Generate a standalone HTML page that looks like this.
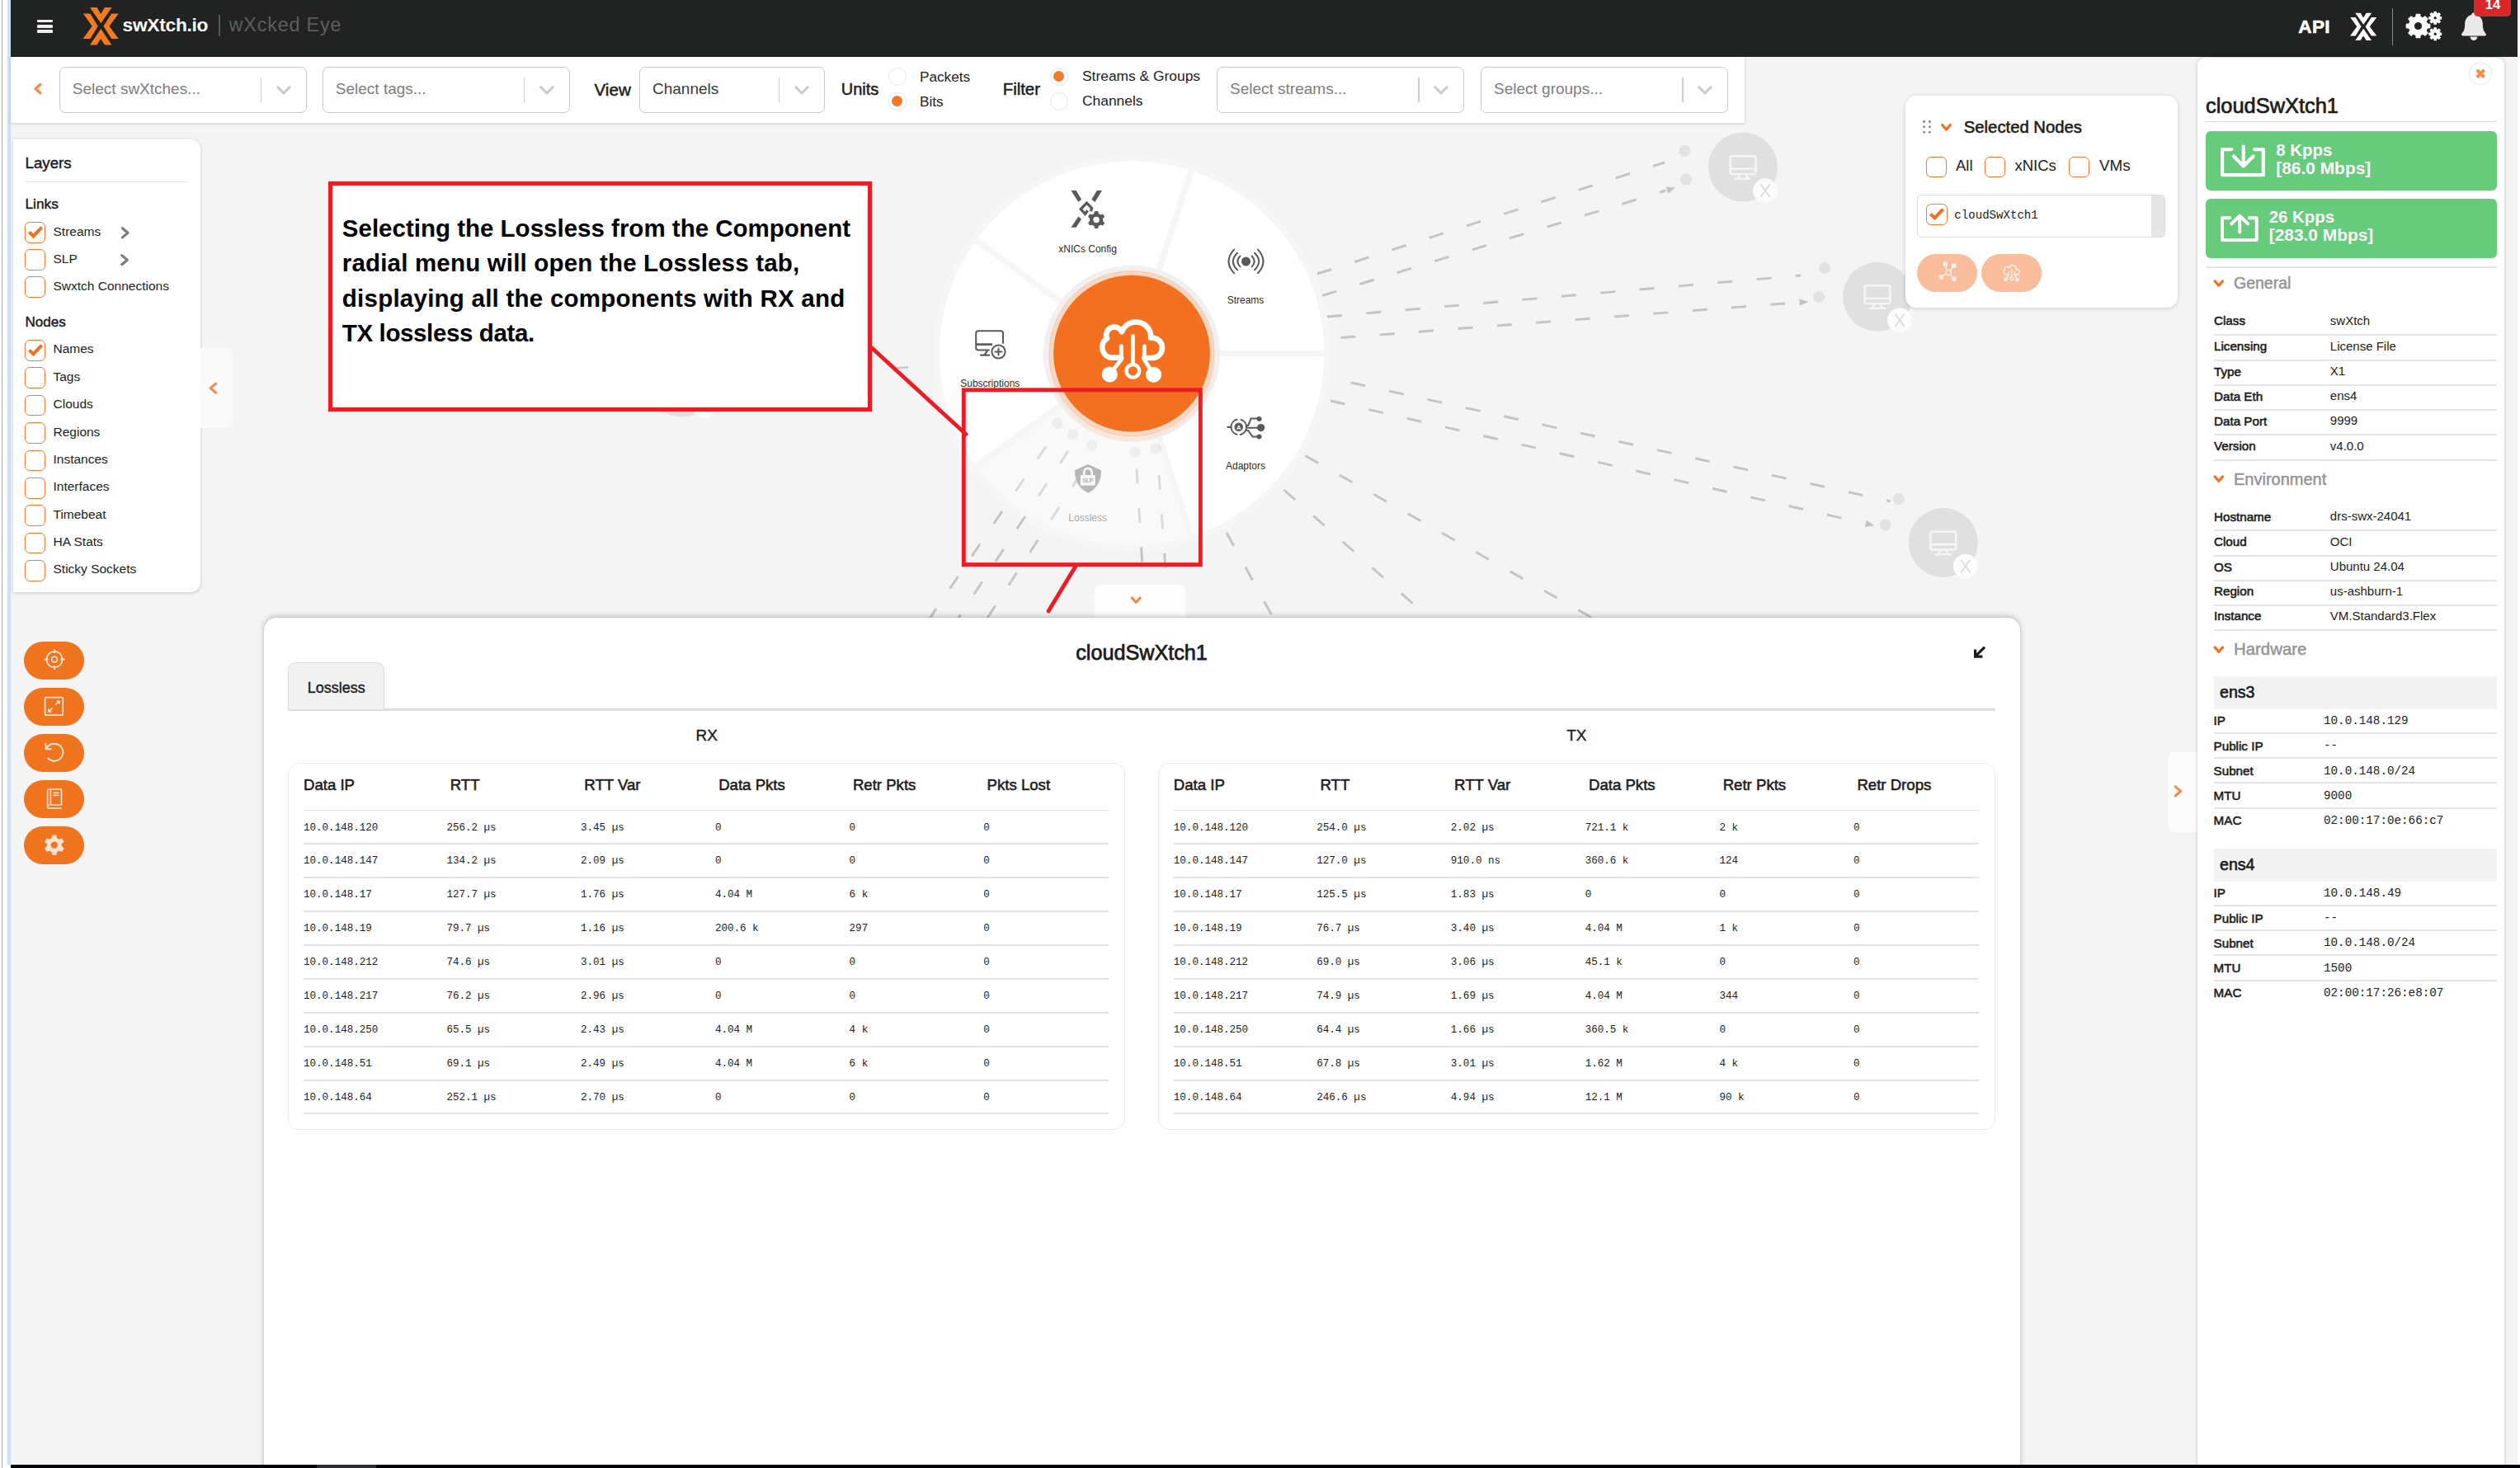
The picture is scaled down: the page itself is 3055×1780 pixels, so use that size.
<!DOCTYPE html>
<html lang="en"><head><meta charset="utf-8"><title>wXcked Eye</title>
<style>
*{box-sizing:border-box;margin:0;padding:0}
html,body{width:3055px;height:1780px;overflow:hidden;background:#fff}
body{position:relative;font-family:"Liberation Sans",sans-serif;color:#222}
.a{position:absolute}
.t{position:absolute;white-space:nowrap;line-height:1}
.mono{font-family:"Liberation Mono","DejaVu Sans Mono",monospace}
.sel{position:absolute;top:81px;height:56px;border:1.5px solid #c9c9c9;border-radius:7px;background:#fff}
.sel .ph{position:absolute;left:14.8px;top:0;line-height:51px;font-size:19px;color:#7d7d7d;white-space:nowrap}
.sel .dv{position:absolute;top:12px;height:30px;width:1.3px;background:#cfcfcf}
.cb{position:absolute;width:26px;height:26px;border:1.6px solid #f47b35;border-radius:6px;background:#fff}
.li{position:absolute;left:64px;font-size:15.5px;color:#222;white-space:nowrap;line-height:20px}
.hl{position:absolute;height:2px;background:#e4e4e4}
</style></head>
<body>
<div class="a" style="left:2px;top:0;width:1.2px;height:1780px;background:#a8a8a8"></div>
<div class="a" style="left:9px;top:0;width:4px;height:1776px;background:#cbe0ff"></div>
<div class="a" style="left:13px;top:0;width:3039px;height:1776px;background:#f4f4f4"></div>
<svg class="a" style="left:13px;top:69px" width="3039" height="1707" viewBox="13 69 3039 1707">
<circle cx="1372.0" cy="428.6" r="240.5" fill="#f6f6f6"/>
<line x1="1597" y1="332" x2="2018" y2="197" stroke="#c4c4c4" stroke-width="2.9" stroke-dasharray="18 29.5" fill="none" stroke-linecap="butt" stroke-dashoffset="0" />
<line x1="1603" y1="358.4" x2="2019.5246973287383" y2="231.009619438477" stroke="#c4c4c4" stroke-width="2.9" stroke-dasharray="18 29.5" fill="none" stroke-linecap="butt" stroke-dashoffset="0" />
<polygon points="2031.4,227.4 2019.7,226.5 2022.2,234.6" fill="#c2c2c2"/>
<line x1="1609" y1="384" x2="2183" y2="334" stroke="#c4c4c4" stroke-width="2.9" stroke-dasharray="18 29.5" fill="none" stroke-linecap="butt" stroke-dashoffset="0" />
<line x1="1625.4" y1="409.5" x2="2180.0355327390084" y2="366.72278012584775" stroke="#c4c4c4" stroke-width="2.9" stroke-dasharray="18 29.5" fill="none" stroke-linecap="butt" stroke-dashoffset="0" />
<polygon points="2192.4,365.8 2181.2,362.4 2181.9,370.8" fill="#c2c2c2"/>
<line x1="1637.7" y1="463.9" x2="2292" y2="607.9" stroke="#c4c4c4" stroke-width="2.9" stroke-dasharray="18 29.5" fill="none" stroke-linecap="butt" stroke-dashoffset="0" />
<line x1="1613" y1="486" x2="2260.3039049324675" y2="634.5164649860229" stroke="#c4c4c4" stroke-width="2.9" stroke-dasharray="18 29.5" fill="none" stroke-linecap="butt" stroke-dashoffset="0" />
<polygon points="2272.4,637.3 2262.7,630.7 2260.8,639.0" fill="#c2c2c2"/>
<line x1="1582.5" y1="552.6" x2="1960" y2="766" stroke="#c4c4c4" stroke-width="2.9" stroke-dasharray="18 29.5" fill="none" stroke-linecap="butt" stroke-dashoffset="0" />
<line x1="1487" y1="646" x2="1555" y2="770" stroke="#c4c4c4" stroke-width="2.9" stroke-dasharray="18 29.5" fill="none" stroke-linecap="butt" stroke-dashoffset="0" />
<line x1="1556.5" y1="594" x2="1784.5" y2="795" stroke="#c4c4c4" stroke-width="2.9" stroke-dasharray="18 29.5" fill="none" stroke-linecap="butt" stroke-dashoffset="0" />
<line x1="1268" y1="541.4" x2="1100" y2="790" stroke="#c4c4c4" stroke-width="2.9" stroke-dasharray="18 29.5" fill="none" stroke-linecap="butt" stroke-dashoffset="0" />
<line x1="1295" y1="546.8" x2="1135" y2="790" stroke="#c4c4c4" stroke-width="2.9" stroke-dasharray="18 29.5" fill="none" stroke-linecap="butt" stroke-dashoffset="0" />
<line x1="1310" y1="575" x2="1170.6" y2="790" stroke="#c4c4c4" stroke-width="2.9" stroke-dasharray="18 29.5" fill="none" stroke-linecap="butt" stroke-dashoffset="0" />
<line x1="1378" y1="568.6" x2="1391" y2="790" stroke="#c4c4c4" stroke-width="2.9" stroke-dasharray="18 29.5" fill="none" stroke-linecap="butt" stroke-dashoffset="0" />
<line x1="1405" y1="576" x2="1420" y2="790" stroke="#c4c4c4" stroke-width="2.9" stroke-dasharray="18 29.5" fill="none" stroke-linecap="butt" stroke-dashoffset="0" />
<line x1="1083" y1="446.5" x2="1101" y2="445.5" stroke="#c6c6c6" stroke-width="2.6"/>
<circle cx="2113" cy="202.6" r="42" fill="#e0e0e0"/><rect x="2097.6" y="189.29999999999998" width="30.8" height="21.8" rx="1.6" fill="none" stroke="#f6f6f6" stroke-width="2.3"/><line x1="2097.6" y1="204.7" x2="2128.4" y2="204.7" stroke="#f6f6f6" stroke-width="2.2"/><path d="M2109.6 211.1 L2107.4 216.0 M2116.4 211.1 L2118.6 216.0 M2102.8 216.79999999999998 H2123.2" stroke="#f6f6f6" stroke-width="2.1" fill="none"/><circle cx="2139.9" cy="231.1" r="14.8" fill="#fcfcfc"/><path d="M2134.3 223.29999999999998 L2145.7000000000003 238.9 M2145.7000000000003 223.29999999999998 L2134.3 238.9" stroke="#dadada" stroke-width="1.7"/>
<circle cx="2276" cy="359.7" r="42" fill="#e0e0e0"/><rect x="2260.6" y="346.4" width="30.8" height="21.8" rx="1.6" fill="none" stroke="#f6f6f6" stroke-width="2.3"/><line x1="2260.6" y1="361.8" x2="2291.4" y2="361.8" stroke="#f6f6f6" stroke-width="2.2"/><path d="M2272.6 368.2 L2270.4 373.09999999999997 M2279.4 368.2 L2281.6 373.09999999999997 M2265.8 373.9 H2286.2" stroke="#f6f6f6" stroke-width="2.1" fill="none"/><circle cx="2302.9" cy="388.2" r="14.8" fill="#fcfcfc"/><path d="M2297.3 380.4 L2308.7000000000003 396.0 M2308.7000000000003 380.4 L2297.3 396.0" stroke="#dadada" stroke-width="1.7"/>
<circle cx="2355.8" cy="658" r="42" fill="#e0e0e0"/><rect x="2340.4" y="644.7" width="30.8" height="21.8" rx="1.6" fill="none" stroke="#f6f6f6" stroke-width="2.3"/><line x1="2340.4" y1="660.1" x2="2371.2000000000003" y2="660.1" stroke="#f6f6f6" stroke-width="2.2"/><path d="M2352.4 666.5 L2350.2000000000003 671.4 M2359.2000000000003 666.5 L2361.4 671.4 M2345.6000000000004 672.2 H2366.0" stroke="#f6f6f6" stroke-width="2.1" fill="none"/><circle cx="2382.7000000000003" cy="686.5" r="14.8" fill="#fcfcfc"/><path d="M2377.1000000000004 678.7 L2388.5000000000005 694.3 M2388.5000000000005 678.7 L2377.1000000000004 694.3" stroke="#dadada" stroke-width="1.7"/>
<circle cx="826.6" cy="463.5" r="42" fill="#e0e0e0"/><rect x="811.2" y="450.2" width="30.8" height="21.8" rx="1.6" fill="none" stroke="#f6f6f6" stroke-width="2.3"/><line x1="811.2" y1="465.6" x2="842.0" y2="465.6" stroke="#f6f6f6" stroke-width="2.2"/><path d="M823.2 472.0 L821.0 476.9 M830.0 472.0 L832.2 476.9 M816.4 477.7 H836.8000000000001" stroke="#f6f6f6" stroke-width="2.1" fill="none"/><circle cx="853.5" cy="492.0" r="14.8" fill="#fcfcfc"/><path d="M847.9 484.2 L859.3 499.8 M859.3 484.2 L847.9 499.8" stroke="#dadada" stroke-width="1.7"/>
<circle cx="2042.3" cy="182.7" r="7" fill="#e2e2e2"/>
<circle cx="2044" cy="217.5" r="7" fill="#e2e2e2"/>
<circle cx="2212" cy="325" r="7" fill="#e2e2e2"/>
<circle cx="2205" cy="360" r="7" fill="#e2e2e2"/>
<circle cx="2302" cy="605" r="7" fill="#e2e2e2"/>
<circle cx="2285.5" cy="636.6" r="7" fill="#e2e2e2"/>
<circle cx="1282" cy="513" r="6.8" fill="#e4e4e4"/>
<circle cx="1300.6" cy="527" r="6.8" fill="#e4e4e4"/>
<circle cx="1323.5" cy="540" r="6.8" fill="#e4e4e4"/>
<circle cx="1375.8" cy="548" r="6.8" fill="#e4e4e4"/>
<circle cx="1400.8" cy="544" r="6.8" fill="#e4e4e4"/>
<path d="M1447.7 207.9 A233.3 233.3 0 0 1 1605.3 424.8 L1478.4 424.8 A106.5 106.5 0 0 0 1408.5 328.6Z" fill="#fff" />
<path d="M1605.3 432.4 A233.3 233.3 0 0 1 1447.7 649.3 L1408.5 528.6 A106.5 106.5 0 0 0 1478.4 432.4Z" fill="#fff" />
<path d="M1440.5 651.6 A233.3 233.3 0 0 1 1185.5 568.8 L1288.1 494.2 A106.5 106.5 0 0 0 1401.3 531.0Z" fill="rgba(255,255,255,.38)" />
<path d="M1181.0 562.6 A233.3 233.3 0 0 1 1181.0 294.6 L1283.7 369.1 A106.5 106.5 0 0 0 1283.7 488.1Z" fill="#fff" />
<path d="M1185.5 288.4 A233.3 233.3 0 0 1 1440.5 205.6 L1401.3 326.2 A106.5 106.5 0 0 0 1288.1 363.0Z" fill="#fff" />
<circle cx="1372.0" cy="428.6" r="107" fill="#f0f0f0"/>
<circle cx="1372.0" cy="434.6" r="101" fill="#fbe3d4" opacity=".6"/>
<circle cx="1372.0" cy="428.6" r="100.4" fill="#fbd8c4"/>
<circle cx="1372.0" cy="428.6" r="99.9" fill="none" stroke="#f7c6ab" stroke-width="1"/>
<circle cx="1372.0" cy="428.6" r="94.9" fill="#f37021"/>
<g fill="none" stroke="#fff" stroke-linecap="round" stroke-linejoin="round"><path d="M1359.2 433.7 H1347.2 A12.7 12.7 0 0 1 1342 410.4 A9.4 9.4 0 0 1 1360 402.2 A18.2 18.2 0 0 1 1395.200 409.7 A12.2 12.2 0 1 1 1396.7 434 H1387.3" stroke-width="6.7"/><path d="M1373.4 407.5 V441 M1359.3 419.8 V436 L1347.5 451 M1387.3 419.8 V436 L1396.500 451" stroke-width="4.9"/><circle cx="1373.4" cy="449.8" r="7.85" stroke-width="4.5"/></g><circle cx="1345.3" cy="454" r="9.6" fill="#fff"/><circle cx="1398.5" cy="454.3" r="9.6" fill="#fff"/>
<g fill="#58595b"><polygon points="1298.4,231 1304.6,231 1311,241.7 1307.4,245"/><polygon points="1329.8,231 1336,231 1327.4,245 1323.4,241.7"/><polygon points="1298.4,275.8 1304.6,275.8 1311,265.8 1307.4,262.4"/></g><path d="M1318.6 255.2 L1315.6 259.4 L1310.2 253.5 L1317.4 246.1 L1323.6 252.4 L1322.3 256.2" fill="none" stroke="#58595b" stroke-width="3.3" stroke-linejoin="miter"/><path d="M1331.45 273.73 L1330.80 276.56 L1327.40 276.56 L1326.75 273.73 L1324.01 272.15 L1321.24 273.00 L1319.54 270.06 L1321.67 268.08 L1321.67 264.92 L1319.54 262.94 L1321.24 260.00 L1324.01 260.85 L1326.75 259.27 L1327.40 256.44 L1330.80 256.44 L1331.45 259.27 L1334.19 260.85 L1336.96 260.00 L1338.66 262.94 L1336.53 264.92 L1336.53 268.08 L1338.66 270.06 L1336.96 273.00 L1334.19 272.15Z" fill="#58595b" stroke="#58595b" stroke-width="1" stroke-linejoin="round"/><circle cx="1329.1" cy="266.5" r="3.7" fill="#fff"/><circle cx="1510.5" cy="317" r="5.5" fill="#58595b"/><g fill="none" stroke="#58595b" stroke-width="2" stroke-linecap="round"><path d="M1503.4 310.5 Q1497.2 316.95 1503.4 323.4"/><path d="M1517.6 310.5 Q1523.8 316.95 1517.6 323.4"/><path d="M1500 306.7 Q1489.6 316.95 1500 327.2"/><path d="M1521.0 306.7 Q1531.4 316.95 1521.0 327.2"/><path d="M1496 302.6 Q1483 316.9 1496 331.2"/><path d="M1525.0 302.6 Q1538.0 316.9 1525.0 331.2"/></g><g fill="none" stroke="#58595b" stroke-width="2" stroke-linecap="round" stroke-linejoin="round"><path d="M1216 416 V404.300 a3 3 0 0 0 -3 -3 H1186.2 a3 3 0 0 0 -3 3 V421.5 a3 3 0 0 0 3 3 H1199"/><path d="M1183.4 417.6 H1203" stroke-width="2.6" stroke-linecap="butt"/><path d="M1196.7 425.5 L1193.8 430 M1189 430.600 H1199.2" stroke-width="2.3"/><circle cx="1210.5" cy="426.5" r="8.1" fill="#fff"/><path d="M1206.4 426.5 H1214.6 M1210.5 422.4 V430.600"/></g><circle cx="1501.7" cy="517.8" r="5.3" fill="#58595b"/><text x="1501.7" y="520.5" font-family="Liberation Sans, sans-serif" font-size="7.5" font-weight="700" fill="#fff" text-anchor="middle">A</text><g fill="none" stroke="#58595b" stroke-width="2" stroke-linecap="round" stroke-linejoin="round"><path d="M1499.4 508.8 A9.3 9.3 0 0 0 1499.4 526.8 M1504.4 508.900 A9.3 9.3 0 0 1 1503.600 526.9"/><path d="M1488.6 517.9 H1492.2" stroke-width="2.4"/><path d="M1511.2 518.7 H1527 M1511 516 H1513.1 L1516.5 507.600 H1526 M1511 522 H1513.1 L1518.600 529.6 H1526"/></g><circle cx="1528.6" cy="518.6" r="4.6" fill="#58595b"/><circle cx="1526.500" cy="507.9" r="3" fill="#58595b"/><circle cx="1526.5" cy="529.6" r="3" fill="#58595b"/><path d="M1319 563 L1335 570.3 C1335.300 585 1328 593.5 1319 597.7 C1310 593.5 1302.700 585 1303 570.3Z" fill="#b7b7b7"/><rect x="1309.8" y="576" width="18" height="12.8" rx="1.6" fill="#f6f6f6"/><path d="M1314.2 576 V572.5 a4.700 4.700 0 0 1 9.400 0 V576" fill="none" stroke="#f6f6f6" stroke-width="2.8"/><text x="1318.8" y="584.9" font-family="Liberation Sans, sans-serif" font-size="6.6" font-weight="700" fill="#b0b0b0" text-anchor="middle">SLP</text>
</svg>
<span class="t" style="left:1258.6px;width:120px;text-align:center;top:293.5px;font-size:12px;line-height:16px;color:#2b2b2b">xNICs Config</span>
<span class="t" style="left:1450px;width:120px;text-align:center;top:355.6px;font-size:12px;line-height:16px;color:#2b2b2b">Streams</span>
<span class="t" style="left:1140.3px;width:120px;text-align:center;top:457.2px;font-size:12px;line-height:16px;color:#2b2b2b">Subscriptions</span>
<span class="t" style="left:1450px;width:120px;text-align:center;top:556.5px;font-size:12px;line-height:16px;color:#2b2b2b">Adaptors</span>
<span class="t" style="left:1258.7px;width:120px;text-align:center;top:619.8px;font-size:12px;line-height:16px;color:#a9a9a9">Lossless</span>
<div class="a" style="left:13px;top:0;width:3039px;height:69px;background:#212322"></div>
<div class="a" style="left:45px;top:23.5px;width:18.5px;height:3.6px;background:#ededed;border-radius:1px"></div>
<div class="a" style="left:45px;top:30px;width:18.5px;height:3.6px;background:#ededed;border-radius:1px"></div>
<div class="a" style="left:45px;top:36px;width:18.5px;height:3.6px;background:#ededed;border-radius:1px"></div>
<svg class="a" style="left:0;top:0" width="3055" height="80" viewBox="0 0 3055 80"><polygon points="109.02,9.07 117.66,9.07 122.09,17.04 126.96,9.07 135.60,9.07 122.31,28.34" fill="#f47a20"/><polygon points="109.02,54.47 117.44,54.47 122.09,46.94 126.96,54.47 135.38,54.47 122.31,34.98" fill="#f47a20"/><polygon points="100.82,16.38 109.46,16.38 118.77,31.66 109.46,46.94 100.60,46.94 111.68,31.66" fill="#f47a20"/><polygon points="143.80,16.38 135.16,16.38 125.41,31.66 135.16,46.94 143.80,46.94 132.50,31.66" fill="#f47a20"/></svg>
<span class="t " style="left:148.5px;top:14.6px;font-size:22.8px;line-height:30px;font-weight:700;color:#fff;letter-spacing:-.3px">swXtch.io</span>
<div class="a" style="left:265.2px;top:17.5px;width:2.2px;height:26.3px;background:#565656"></div>
<span class="t " style="left:277.6px;top:15.0px;font-size:23.3px;line-height:30px;font-weight:400;color:#5e5e5e;letter-spacing:.85px">wXcked Eye</span>
<span class="t " style="left:2786.3px;top:17.7px;font-size:22.5px;line-height:29px;font-weight:700;color:#fff;letter-spacing:.4px;-webkit-text-stroke:.6px #fff">API</span>
<svg class="a" style="left:0;top:0" width="3055" height="80" viewBox="0 0 3055 80"><polygon points="2855.29,15.70 2861.75,15.70 2865.07,21.55 2868.71,15.70 2875.17,15.70 2865.23,29.83" fill="#fff"/><polygon points="2855.29,49.00 2861.59,49.00 2865.07,43.48 2868.71,49.00 2875.01,49.00 2865.23,34.71" fill="#fff"/><polygon points="2849.17,21.06 2855.63,21.06 2862.58,32.27 2855.63,43.48 2849.00,43.48 2857.28,32.27" fill="#fff"/><polygon points="2881.30,21.06 2874.84,21.06 2867.55,32.27 2874.84,43.48 2881.30,43.48 2872.85,32.27" fill="#fff"/></svg>
<div class="a" style="left:2899.6px;top:10px;width:1.5px;height:45px;background:#8a8a8a"></div>
<svg class="a" style="left:0;top:0" width="3055" height="80" viewBox="0 0 3055 80"><path d="M2942.37 28.80 L2945.72 29.25 L2945.72 33.75 L2942.37 34.20 L2941.10 37.28 L2943.15 39.96 L2939.96 43.15 L2937.28 41.10 L2934.20 42.37 L2933.75 45.72 L2929.25 45.72 L2928.80 42.37 L2925.72 41.10 L2923.04 43.15 L2919.85 39.96 L2921.90 37.28 L2920.63 34.20 L2917.28 33.75 L2917.28 29.25 L2920.63 28.80 L2921.90 25.72 L2919.85 23.04 L2923.04 19.85 L2925.72 21.90 L2928.80 20.63 L2929.25 17.28 L2933.75 17.28 L2934.20 20.63 L2937.28 21.90 L2939.96 19.85 L2943.15 23.04 L2941.10 25.72Z M2936.70 31.50 A5.2 5.2 0 1 0 2926.30 31.50 A5.2 5.2 0 1 0 2936.70 31.50Z" fill="#fff" fill-rule="evenodd" stroke="#fff" stroke-width="1.2" stroke-linejoin="round"/><path d="M2957.63 20.45 L2959.61 20.63 L2959.61 22.97 L2957.63 23.15 L2957.00 24.69 L2958.27 26.21 L2956.61 27.87 L2955.09 26.60 L2953.55 27.23 L2953.37 29.21 L2951.03 29.21 L2950.85 27.23 L2949.31 26.60 L2947.79 27.87 L2946.13 26.21 L2947.40 24.69 L2946.77 23.15 L2944.79 22.97 L2944.79 20.63 L2946.77 20.45 L2947.40 18.91 L2946.13 17.39 L2947.79 15.73 L2949.31 17.00 L2950.85 16.37 L2951.03 14.39 L2953.37 14.39 L2953.55 16.37 L2955.09 17.00 L2956.61 15.73 L2958.27 17.39 L2957.00 18.91Z M2954.50 21.80 A2.3 2.3 0 1 0 2949.90 21.80 A2.3 2.3 0 1 0 2954.50 21.80Z" fill="#fff" fill-rule="evenodd" stroke="#fff" stroke-width="1.2" stroke-linejoin="round"/><path d="M2957.63 39.85 L2959.61 40.03 L2959.61 42.37 L2957.63 42.55 L2957.00 44.09 L2958.27 45.61 L2956.61 47.27 L2955.09 46.00 L2953.55 46.63 L2953.37 48.61 L2951.03 48.61 L2950.85 46.63 L2949.31 46.00 L2947.79 47.27 L2946.13 45.61 L2947.40 44.09 L2946.77 42.55 L2944.79 42.37 L2944.79 40.03 L2946.77 39.85 L2947.40 38.31 L2946.13 36.79 L2947.79 35.13 L2949.31 36.40 L2950.85 35.77 L2951.03 33.79 L2953.37 33.79 L2953.55 35.77 L2955.09 36.40 L2956.61 35.13 L2958.27 36.79 L2957.00 38.31Z M2954.50 41.20 A2.3 2.3 0 1 0 2949.90 41.20 A2.3 2.3 0 1 0 2954.50 41.20Z" fill="#fff" fill-rule="evenodd" stroke="#fff" stroke-width="1.2" stroke-linejoin="round"/><path d="M2999 15.2 c1.6 0 2.6 1.2 2.6 2.6 c5 1.4 8.2 5.6 8.2 11 c0 6.4 1.4 9.4 3.6 11.6 c1.2 1.2 .4 3.2 -1.4 3.2 h-26 c-1.8 0 -2.6 -2 -1.4 -3.2 c2.2 -2.2 3.6 -5.200 3.6 -11.6 c0 -5.4 3.2 -9.600 8.200 -11 c0 -1.4 1 -2.6 2.600 -2.6z" fill="#e9e9e9"/><path d="M2994.6 44.6 h8.8 a4.400 4.400 0 0 1 -8.800 0z" fill="#e9e9e9"/></svg>
<div class="a" style="left:2999px;top:-6px;width:45px;height:26px;background:#dc2727;border-radius:5px"></div>
<span class="t " style="left:3012.8px;top:-4.7px;font-size:16.6px;line-height:22px;font-weight:700;color:#fff;">14</span>
<div class="a" style="left:13px;top:69px;width:2102px;height:80px;background:#fff;box-shadow:0 1px 4px rgba(0,0,0,.16)"></div>
<svg class="a" style="left:0;top:69px" width="2200" height="80" viewBox="0 69 2200 80"><polyline points="48.9,102.5 43.1,107.6 48.9,112.69999999999999" fill="none" stroke="#f48a4a" stroke-width="3.3" stroke-linecap="round" stroke-linejoin="round"/></svg>
<div class="sel" style="left:72px;width:299.5px"><span class="ph" style="color:#7d7d7d">Select swXtches...</span><span class="dv" style="left:243.1px"></span><svg class="a" style="left:258.7px;top:17px" width="24" height="20" viewBox="0 0 24 20"><polyline points="4.8,6.6000000000000005 12,14.0 19.2,6.6000000000000005" fill="none" stroke="#cbcbcb" stroke-width="3.1" stroke-linecap="round" stroke-linejoin="round"/></svg></div>
<div class="sel" style="left:391px;width:299.5px"><span class="ph" style="color:#7d7d7d">Select tags...</span><span class="dv" style="left:243.1px"></span><svg class="a" style="left:258.7px;top:17px" width="24" height="20" viewBox="0 0 24 20"><polyline points="4.8,6.6000000000000005 12,14.0 19.2,6.6000000000000005" fill="none" stroke="#cbcbcb" stroke-width="3.1" stroke-linecap="round" stroke-linejoin="round"/></svg></div>
<span class="t " style="left:720.5px;top:94.9px;font-size:20.6px;line-height:27px;font-weight:400;color:#1c1c1c;-webkit-text-stroke:.5px #1c1c1c">View</span>
<div class="sel" style="left:775.2px;width:224.39999999999998px"><span class="ph" style="color:#3a3a3a">Channels</span><span class="dv" style="left:167.99999999999997px"></span><svg class="a" style="left:183.59999999999997px;top:17px" width="24" height="20" viewBox="0 0 24 20"><polyline points="4.8,6.6000000000000005 12,14.0 19.2,6.6000000000000005" fill="none" stroke="#cbcbcb" stroke-width="3.1" stroke-linecap="round" stroke-linejoin="round"/></svg></div>
<span class="t " style="left:1019.8px;top:95.4px;font-size:20px;line-height:26px;font-weight:400;color:#1c1c1c;-webkit-text-stroke:.5px #1c1c1c">Units</span>
<div class="a" style="left:1076.6px;top:82.1px;width:22px;height:22px;border-radius:50%;background:#fff;border:1.3px solid #e6e6e6"></div>
<div class="a" style="left:1076.6px;top:111.9px;width:22px;height:22px;border-radius:50%;background:#fff;border:1.3px solid #e9e4e0"><div class="a" style="left:3.2px;top:3.2px;width:13px;height:13px;border-radius:50%;background:#f27a24"></div></div>
<span class="t " style="left:1115px;top:82.0px;font-size:17.2px;line-height:22px;font-weight:400;color:#222;">Packets</span>
<span class="t " style="left:1115px;top:111.6px;font-size:17.2px;line-height:22px;font-weight:400;color:#222;">Bits</span>
<span class="t " style="left:1215.7px;top:94.9px;font-size:20.4px;line-height:27px;font-weight:400;color:#1c1c1c;-webkit-text-stroke:.5px #1c1c1c">Filter</span>
<div class="a" style="left:1272.8px;top:82.1px;width:22px;height:22px;border-radius:50%;background:#fff;border:1.3px solid #e9e4e0"><div class="a" style="left:3.2px;top:3.2px;width:13px;height:13px;border-radius:50%;background:#f27a24"></div></div>
<div class="a" style="left:1272.8px;top:111.9px;width:22px;height:22px;border-radius:50%;background:#fff;border:1.3px solid #e6e6e6"></div>
<span class="t " style="left:1312px;top:81.4px;font-size:17.4px;line-height:23px;font-weight:400;color:#222;">Streams &amp; Groups</span>
<span class="t " style="left:1312px;top:111.1px;font-size:17.4px;line-height:23px;font-weight:400;color:#222;">Channels</span>
<div class="sel" style="left:1475.2px;width:299.5999999999999px"><span class="ph" style="color:#7d7d7d">Select streams...</span><span class="dv" style="left:243.1999999999999px"></span><svg class="a" style="left:258.7999999999999px;top:17px" width="24" height="20" viewBox="0 0 24 20"><polyline points="4.8,6.6000000000000005 12,14.0 19.2,6.6000000000000005" fill="none" stroke="#cbcbcb" stroke-width="3.1" stroke-linecap="round" stroke-linejoin="round"/></svg></div>
<div class="sel" style="left:1795.2px;width:299.60000000000014px"><span class="ph" style="color:#7d7d7d">Select groups...</span><span class="dv" style="left:243.20000000000013px"></span><svg class="a" style="left:258.8000000000001px;top:17px" width="24" height="20" viewBox="0 0 24 20"><polyline points="4.8,6.6000000000000005 12,14.0 19.2,6.6000000000000005" fill="none" stroke="#cbcbcb" stroke-width="3.1" stroke-linecap="round" stroke-linejoin="round"/></svg></div>
<div class="a" style="left:15.5px;top:168.5px;width:227.5px;height:549.5px;background:#fff;border-radius:0 12px 12px 0;box-shadow:0 1px 4px rgba(0,0,0,.18)"></div>
<span class="t " style="left:30.5px;top:185.5px;font-size:18.7px;line-height:24px;font-weight:400;color:#1c1c1c;-webkit-text-stroke:.45px #1c1c1c">Layers</span>
<div class="a" style="left:30px;top:219.5px;width:198px;height:1.5px;background:#e3e3e3"></div>
<span class="t " style="left:30.5px;top:235.8px;font-size:17.3px;line-height:22px;font-weight:400;color:#1c1c1c;-webkit-text-stroke:.45px #1c1c1c">Links</span>
<span class="t " style="left:30.5px;top:380.2px;font-size:17.1px;line-height:22px;font-weight:400;color:#1c1c1c;-webkit-text-stroke:.45px #1c1c1c">Nodes</span>
<div class="cb" style="left:29.8px;top:269.4px;width:25.6px;height:25.6px"><svg class="a" style="left:0;top:0" width="23" height="23" viewBox="0 0 23 23"><polyline points="4.4,11.4 9.4,16.4 19.6,5.6" fill="none" stroke="#f37021" stroke-width="4" stroke-linecap="butt" stroke-linejoin="miter"/></svg></div>
<span class="t " style="left:64.5px;top:270.7px;font-size:15.5px;line-height:20px;font-weight:400;color:#222;">Streams</span>
<div class="cb" style="left:29.8px;top:302.3px;width:25.6px;height:25.6px"></div>
<span class="t " style="left:64.5px;top:303.6px;font-size:15.5px;line-height:20px;font-weight:400;color:#222;">SLP</span>
<div class="cb" style="left:29.8px;top:335.2px;width:25.6px;height:25.6px"></div>
<span class="t " style="left:64.5px;top:336.5px;font-size:15.5px;line-height:20px;font-weight:400;color:#222;">Swxtch Connections</span>
<div class="cb" style="left:29.8px;top:412.09999999999997px;width:25.6px;height:25.6px"><svg class="a" style="left:0;top:0" width="23" height="23" viewBox="0 0 23 23"><polyline points="4.4,11.4 9.4,16.4 19.6,5.6" fill="none" stroke="#f37021" stroke-width="4" stroke-linecap="butt" stroke-linejoin="miter"/></svg></div>
<span class="t " style="left:64.5px;top:413.4px;font-size:15.5px;line-height:20px;font-weight:400;color:#222;">Names</span>
<div class="cb" style="left:29.8px;top:445.46999999999997px;width:25.6px;height:25.6px"></div>
<span class="t " style="left:64.5px;top:446.8px;font-size:15.5px;line-height:20px;font-weight:400;color:#222;">Tags</span>
<div class="cb" style="left:29.8px;top:478.84px;width:25.6px;height:25.6px"></div>
<span class="t " style="left:64.5px;top:480.1px;font-size:15.5px;line-height:20px;font-weight:400;color:#222;">Clouds</span>
<div class="cb" style="left:29.8px;top:512.21px;width:25.6px;height:25.6px"></div>
<span class="t " style="left:64.5px;top:513.5px;font-size:15.5px;line-height:20px;font-weight:400;color:#222;">Regions</span>
<div class="cb" style="left:29.8px;top:545.58px;width:25.6px;height:25.6px"></div>
<span class="t " style="left:64.5px;top:546.9px;font-size:15.5px;line-height:20px;font-weight:400;color:#222;">Instances</span>
<div class="cb" style="left:29.8px;top:578.95px;width:25.6px;height:25.6px"></div>
<span class="t " style="left:64.5px;top:580.2px;font-size:15.5px;line-height:20px;font-weight:400;color:#222;">Interfaces</span>
<div class="cb" style="left:29.8px;top:612.3199999999999px;width:25.6px;height:25.6px"></div>
<span class="t " style="left:64.5px;top:613.6px;font-size:15.5px;line-height:20px;font-weight:400;color:#222;">Timebeat</span>
<div class="cb" style="left:29.8px;top:645.69px;width:25.6px;height:25.6px"></div>
<span class="t " style="left:64.5px;top:647.0px;font-size:15.5px;line-height:20px;font-weight:400;color:#222;">HA Stats</span>
<div class="cb" style="left:29.8px;top:679.06px;width:25.6px;height:25.6px"></div>
<span class="t " style="left:64.5px;top:680.4px;font-size:15.5px;line-height:20px;font-weight:400;color:#222;">Sticky Sockets</span>
<div class="a" style="left:243px;top:421.7px;width:39px;height:97px;background:#fafafa;border-radius:0 8px 8px 0"></div>
<svg class="a" style="left:0;top:150px" width="320" height="400" viewBox="0 150 320 400"><polyline points="148.39999999999998,276.7 155.0,282.3 148.39999999999998,287.90000000000003" fill="none" stroke="#7d7d7d" stroke-width="3.2" stroke-linecap="round" stroke-linejoin="round"/><polyline points="147.7,309.59999999999997 154.3,315.2 147.7,320.8" fill="none" stroke="#7d7d7d" stroke-width="3.2" stroke-linecap="round" stroke-linejoin="round"/><polyline points="261.65,465.2 255.14999999999998,470.7 261.65,476.2" fill="none" stroke="#f48a4a" stroke-width="3" stroke-linecap="round" stroke-linejoin="round"/></svg>
<div class="a" style="left:29px;top:778px;width:73px;height:46px;border-radius:23px;background:#f0731e"></div><svg class="a" style="left:29px;top:778px" width="73" height="46" viewBox="0 0 73 46"><g fill="none" stroke="#fde3d3" stroke-width="1.8"><circle cx="37" cy="21.5" r="9.6"/><circle cx="37" cy="21.5" r="3.4"/><path d="M37 9 V14 M37 29 V34 M24.500 21.5 H29.5 M44.5 21.5 H49.500"/></g></svg>
<div class="a" style="left:29px;top:834px;width:73px;height:46px;border-radius:23px;background:#f0731e"></div><svg class="a" style="left:29px;top:834px" width="73" height="46" viewBox="0 0 73 46"><g fill="none" stroke="#fde3d3" stroke-width="1.7" stroke-linejoin="round"><rect x="25.6" y="11.6" width="21.600" height="21.6" rx="1"/><path d="M39.5 16 H43 V19.500 M43 16 L38 21 M33.5 29 H30 V25.500 M30 29 L35 24"/></g></svg>
<div class="a" style="left:29px;top:890px;width:73px;height:46px;border-radius:23px;background:#f0731e"></div><svg class="a" style="left:29px;top:890px" width="73" height="46" viewBox="0 0 73 46"><g fill="none" stroke="#fde3d3" stroke-width="2" stroke-linecap="round" stroke-linejoin="round"><path d="M27.5 17.5 A10.5 10.5 0 1 1 29.300 29.5"/><path d="M26.500 12 V18.300 H32.8"/></g></svg>
<div class="a" style="left:29px;top:946px;width:73px;height:46px;border-radius:23px;background:#f0731e"></div><svg class="a" style="left:29px;top:946px" width="73" height="46" viewBox="0 0 73 46"><g fill="none" stroke="#fde3d3" stroke-width="1.7" stroke-linejoin="round"><path d="M28.6 12.5 a1.500 1.500 0 0 1 1.500 -1.500 H45.500 V30 H30.5 a1.900 1.900 0 0 0 0 3.800 H45.500"/><path d="M28.6 12.500 V32 M32.400 11.200 V30 M35.5 15.300 H42.500 M35.5 18.300 H42.500"/></g></svg>
<div class="a" style="left:29px;top:1002.4px;width:73px;height:46px;border-radius:23px;background:#f0731e"></div><svg class="a" style="left:29px;top:1002.4px" width="73" height="46" viewBox="0 0 73 46"><path d="M39.40 30.59 L38.85 34.02 L34.75 34.02 L34.20 30.59 L31.18 28.84 L27.94 30.09 L25.89 26.53 L28.58 24.35 L28.58 20.85 L25.89 18.67 L27.94 15.11 L31.18 16.36 L34.20 14.61 L34.75 11.18 L38.85 11.18 L39.40 14.61 L42.42 16.36 L45.66 15.11 L47.71 18.67 L45.02 20.85 L45.02 24.35 L47.71 26.53 L45.66 30.09 L42.42 28.84Z" fill="#fde3d3" stroke="#fde3d3" stroke-width="1.4" stroke-linejoin="round"/><circle cx="36.8" cy="22.6" r="4.2" fill="#f0731e"/></svg>
<div class="a" style="left:2309.7px;top:115.8px;width:330.5px;height:257.4px;background:#fff;border-radius:13px;box-shadow:0 1px 5px rgba(0,0,0,.16)"></div>
<svg class="a" style="left:2300px;top:100px" width="360" height="290" viewBox="2300 100 360 290"><circle cx="2332.6" cy="147.4" r="1.55" fill="#8f8f8f"/><circle cx="2332.6" cy="153.8" r="1.55" fill="#8f8f8f"/><circle cx="2332.6" cy="160.2" r="1.55" fill="#8f8f8f"/><circle cx="2339.4" cy="147.4" r="1.55" fill="#8f8f8f"/><circle cx="2339.4" cy="153.8" r="1.55" fill="#8f8f8f"/><circle cx="2339.4" cy="160.2" r="1.55" fill="#8f8f8f"/><polyline points="2354.7,151.5 2359.5,157.10000000000002 2364.3,151.5" fill="none" stroke="#f37021" stroke-width="3.2" stroke-linecap="round" stroke-linejoin="round"/></svg>
<span class="t " style="left:2380.8px;top:140.6px;font-size:20.3px;line-height:26px;font-weight:400;color:#1c1c1c;-webkit-text-stroke:.55px #1c1c1c">Selected Nodes</span>
<div class="cb" style="left:2335.2px;top:189.8px;width:25px;height:25px"></div>
<span class="t " style="left:2371px;top:188.8px;font-size:18.5px;line-height:24px;font-weight:400;color:#222;">All</span>
<div class="cb" style="left:2406px;top:189.8px;width:25px;height:25px"></div>
<span class="t " style="left:2442.5px;top:188.8px;font-size:18.5px;line-height:24px;font-weight:400;color:#222;">xNICs</span>
<div class="cb" style="left:2508px;top:189.8px;width:25px;height:25px"></div>
<span class="t " style="left:2545px;top:188.3px;font-size:18.9px;line-height:25px;font-weight:400;color:#222;">VMs</span>
<div class="a" style="left:2324.3px;top:236px;width:300.4px;height:52px;background:#fff;border:1.3px solid #dcdcdc;border-radius:5px;overflow:hidden"><div class="a" style="right:0;top:0;width:15.5px;height:52px;background:#e6e6e6"></div></div>
<div class="cb" style="left:2335.2px;top:247.2px;width:25.6px;height:25.6px"><svg class="a" style="left:0;top:0" width="23" height="23" viewBox="0 0 23 23"><polyline points="4.4,11.4 9.4,16.4 19.6,5.6" fill="none" stroke="#f37021" stroke-width="4" stroke-linecap="butt" stroke-linejoin="miter"/></svg></div>
<span class="t mono" style="left:2369.3px;top:252.4px;font-size:14.1px;line-height:18px;font-weight:400;color:#222;">cloudSwXtch1</span>
<div class="a" style="left:2323.6px;top:308.2px;width:73.3px;height:45.4px;border-radius:23px;background:#f9bd9b"></div><svg class="a" style="left:2323.6px;top:308.2px" width="73.3" height="45.4" viewBox="0 0 73.3 45.4"><g stroke="#fdeee4" stroke-width="1.5" fill="none"><circle cx="38" cy="22.5" r="3"/><path d="M36.300 20 L34.300 13.500 M40 20.300 L44.800 14.500 M35.300 24 L29.500 27.800 M40 24.800 L44.800 30"/></g><g fill="#fdeee4"><rect x="31.6" y="9.600" width="5.300" height="5.300" rx=".8"/><rect x="42.1" y="11.500" width="5.300" height="5.300" rx=".8"/><rect x="26.700" y="25.100" width="5.300" height="5.300" rx=".8"/><rect x="42.100" y="27.400" width="5.300" height="5.300" rx=".8"/></g></svg>
<div class="a" style="left:2402px;top:308.2px;width:73.3px;height:45.4px;border-radius:23px;background:#f9bd9b"></div><svg class="a" style="left:2402px;top:308.2px" width="73.3" height="45.4" viewBox="0 0 73.3 45.4"><g fill="none" stroke="#fdeee4" stroke-width="1.7" stroke-linecap="round" stroke-linejoin="round" transform="translate(36.6 22.5) scale(.262) translate(-1372.5 -424)"><path d="M1359.2 433.7 H1347.2 A12.7 12.7 0 0 1 1342 410.4 A9.4 9.4 0 0 1 1360 402.2 A18.2 18.2 0 0 1 1395.200 409.7 A12.2 12.2 0 1 1 1396.7 434 H1387.3" stroke-width="6"/><path d="M1373.4 407.5 V441 M1359.3 419.8 V436 L1347.5 451 M1387.3 419.8 V436 L1396.500 451" stroke-width="5.5"/><circle cx="1373.4" cy="451.8" r="7.85" stroke-width="5"/><circle cx="1345.3" cy="456" r="7" stroke-width="5" fill="#fdeee4"/><circle cx="1398.5" cy="456.3" r="7" stroke-width="5" fill="#fdeee4"/></g></svg>
<div class="a" style="left:2628px;top:911.6px;width:40px;height:97px;background:#fcfcfc;border-radius:8px 0 0 8px"></div>
<div class="a" style="left:2663.5px;top:70px;width:372.8px;height:1720px;background:#fff;border-radius:9px 9px 0 0;box-shadow:0 0 5px rgba(0,0,0,.2)"></div>
<span class="t " style="left:2674px;top:111.8px;font-size:25.4px;line-height:33px;font-weight:400;color:#1c1c1c;-webkit-text-stroke:.7px #1c1c1c">cloudSwXtch1</span>
<div class="a" style="left:2674px;top:147px;width:352.6px;height:1.4px;background:#dadada"></div>
<div class="a" style="left:2674px;top:159px;width:352.6px;height:71.6px;background:#66cb7b;border-radius:6px"></div>
<div class="a" style="left:2674px;top:241.1px;width:352.6px;height:71.600px;background:#66cb7b;border-radius:6px"></div>
<span class="t " style="left:2759.3px;top:168.8px;font-size:20.4px;line-height:27px;font-weight:700;color:#fff;">8 Kpps</span>
<span class="t " style="left:2759.3px;top:189.9px;font-size:20.9px;line-height:27px;font-weight:700;color:#fff;">[86.0 Mbps]</span>
<span class="t " style="left:2750.7px;top:249.8px;font-size:20.4px;line-height:27px;font-weight:700;color:#fff;">26 Kpps</span>
<span class="t " style="left:2750.7px;top:271.4px;font-size:20.9px;line-height:27px;font-weight:700;color:#fff;">[283.0 Mbps]</span>
<div class="hl" style="left:2674px;top:322.6px;width:352.6px"></div>
<span class="t " style="left:2708px;top:331.1px;font-size:19.5px;line-height:25px;font-weight:400;color:#959595;-webkit-text-stroke:.5px #959595">General</span>
<span class="t " style="left:2708px;top:567.7px;font-size:20.0px;line-height:26px;font-weight:400;color:#959595;-webkit-text-stroke:.5px #959595">Environment</span>
<span class="t " style="left:2708px;top:773.9px;font-size:20.4px;line-height:27px;font-weight:400;color:#959595;-webkit-text-stroke:.5px #959595">Hardware</span>
<span class="t " style="left:2684px;top:379.3px;font-size:15.2px;line-height:20px;font-weight:400;color:#1a1a1a;-webkit-text-stroke:.55px #1a1a1a">Class</span><span class="t " style="left:2824.8px;top:378.7px;font-size:15px;line-height:20px;font-weight:400;color:#222;">swXtch</span><div class="hl" style="left:2684px;top:404.7px;width:342.8px"></div>
<span class="t " style="left:2684px;top:410.1px;font-size:15.2px;line-height:20px;font-weight:400;color:#1a1a1a;-webkit-text-stroke:.55px #1a1a1a">Licensing</span><span class="t " style="left:2824.8px;top:409.5px;font-size:15px;line-height:20px;font-weight:400;color:#222;">License File</span><div class="hl" style="left:2684px;top:435.5px;width:342.8px"></div>
<span class="t " style="left:2684px;top:440.5px;font-size:15.2px;line-height:20px;font-weight:400;color:#1a1a1a;-webkit-text-stroke:.55px #1a1a1a">Type</span><span class="t " style="left:2824.8px;top:439.9px;font-size:15px;line-height:20px;font-weight:400;color:#222;">X1</span><div class="hl" style="left:2684px;top:465.9px;width:342.8px"></div>
<span class="t " style="left:2684px;top:470.8px;font-size:15.2px;line-height:20px;font-weight:400;color:#1a1a1a;-webkit-text-stroke:.55px #1a1a1a">Data Eth</span><span class="t " style="left:2824.8px;top:470.2px;font-size:15px;line-height:20px;font-weight:400;color:#222;">ens4</span><div class="hl" style="left:2684px;top:496.2px;width:342.8px"></div>
<span class="t " style="left:2684px;top:500.9px;font-size:15.2px;line-height:20px;font-weight:400;color:#1a1a1a;-webkit-text-stroke:.55px #1a1a1a">Data Port</span><span class="t " style="left:2824.8px;top:500.3px;font-size:15px;line-height:20px;font-weight:400;color:#222;">9999</span><div class="hl" style="left:2684px;top:526.3px;width:342.8px"></div>
<span class="t " style="left:2684px;top:531.2px;font-size:15.2px;line-height:20px;font-weight:400;color:#1a1a1a;-webkit-text-stroke:.55px #1a1a1a">Version</span><span class="t " style="left:2824.8px;top:530.6px;font-size:15px;line-height:20px;font-weight:400;color:#222;">v4.0.0</span><div class="hl" style="left:2684px;top:556.6px;width:342.8px"></div>
<span class="t " style="left:2684px;top:616.6px;font-size:15.2px;line-height:20px;font-weight:400;color:#1a1a1a;-webkit-text-stroke:.55px #1a1a1a">Hostname</span><span class="t " style="left:2824.8px;top:616.0px;font-size:15px;line-height:20px;font-weight:400;color:#222;">drs-swx-24041</span><div class="hl" style="left:2684px;top:642.0px;width:342.8px"></div>
<span class="t " style="left:2684px;top:647.3px;font-size:15.2px;line-height:20px;font-weight:400;color:#1a1a1a;-webkit-text-stroke:.55px #1a1a1a">Cloud</span><span class="t " style="left:2824.8px;top:646.7px;font-size:15px;line-height:20px;font-weight:400;color:#222;">OCI</span><div class="hl" style="left:2684px;top:672.7px;width:342.8px"></div>
<span class="t " style="left:2684px;top:677.5px;font-size:15.2px;line-height:20px;font-weight:400;color:#1a1a1a;-webkit-text-stroke:.55px #1a1a1a">OS</span><span class="t " style="left:2824.8px;top:676.9px;font-size:15px;line-height:20px;font-weight:400;color:#222;">Ubuntu 24.04</span><div class="hl" style="left:2684px;top:702.9px;width:342.8px"></div>
<span class="t " style="left:2684px;top:707.3px;font-size:15.2px;line-height:20px;font-weight:400;color:#1a1a1a;-webkit-text-stroke:.55px #1a1a1a">Region</span><span class="t " style="left:2824.8px;top:706.7px;font-size:15px;line-height:20px;font-weight:400;color:#222;">us-ashburn-1</span><div class="hl" style="left:2684px;top:732.7px;width:342.8px"></div>
<span class="t " style="left:2684px;top:737.4px;font-size:15.2px;line-height:20px;font-weight:400;color:#1a1a1a;-webkit-text-stroke:.55px #1a1a1a">Instance</span><span class="t " style="left:2824.8px;top:736.8px;font-size:15px;line-height:20px;font-weight:400;color:#222;">VM.Standard3.Flex</span><div class="hl" style="left:2684px;top:762.8px;width:342.8px"></div>
<div class="a" style="left:2683.6px;top:820.3px;width:343.2px;height:39.6px;background:#f3f3f3"></div><span class="t " style="left:2691px;top:826.8px;font-size:19.6px;line-height:25px;font-weight:400;color:#1a1a1a;-webkit-text-stroke:.6px #1a1a1a">ens3</span><span class="t " style="left:2683.6px;top:864.3px;font-size:15.2px;line-height:20px;font-weight:400;color:#1a1a1a;-webkit-text-stroke:.55px #1a1a1a">IP</span><span class="t mono" style="left:2817px;top:865.0px;font-size:14.25px;line-height:19px;font-weight:400;color:#222;">10.0.148.129</span><div class="hl" style="left:2683.6px;top:887.9px;width:343.2px"></div><span class="t " style="left:2683.6px;top:894.5px;font-size:15.2px;line-height:20px;font-weight:400;color:#1a1a1a;-webkit-text-stroke:.55px #1a1a1a">Public IP</span><span class="t mono" style="left:2817px;top:895.2px;font-size:14.25px;line-height:19px;font-weight:400;color:#222;">--</span><div class="hl" style="left:2683.6px;top:918.1px;width:343.2px"></div><span class="t " style="left:2683.6px;top:924.8px;font-size:15.2px;line-height:20px;font-weight:400;color:#1a1a1a;-webkit-text-stroke:.55px #1a1a1a">Subnet</span><span class="t mono" style="left:2817px;top:925.5px;font-size:14.25px;line-height:19px;font-weight:400;color:#222;">10.0.148.0/24</span><div class="hl" style="left:2683.6px;top:948.4px;width:343.2px"></div><span class="t " style="left:2683.6px;top:955.0px;font-size:15.2px;line-height:20px;font-weight:400;color:#1a1a1a;-webkit-text-stroke:.55px #1a1a1a">MTU</span><span class="t mono" style="left:2817px;top:955.7px;font-size:14.25px;line-height:19px;font-weight:400;color:#222;">9000</span><div class="hl" style="left:2683.6px;top:978.6px;width:343.2px"></div><span class="t " style="left:2683.6px;top:985.3px;font-size:15.2px;line-height:20px;font-weight:400;color:#1a1a1a;-webkit-text-stroke:.55px #1a1a1a">MAC</span><span class="t mono" style="left:2817px;top:986.0px;font-size:14.25px;line-height:19px;font-weight:400;color:#222;">02:00:17:0e:66:c7</span>
<div class="a" style="left:2683.6px;top:1029.2px;width:343.2px;height:39.6px;background:#f3f3f3"></div><span class="t " style="left:2691px;top:1035.7px;font-size:19.6px;line-height:25px;font-weight:400;color:#1a1a1a;-webkit-text-stroke:.6px #1a1a1a">ens4</span><span class="t " style="left:2683.6px;top:1073.2px;font-size:15.2px;line-height:20px;font-weight:400;color:#1a1a1a;-webkit-text-stroke:.55px #1a1a1a">IP</span><span class="t mono" style="left:2817px;top:1073.9px;font-size:14.25px;line-height:19px;font-weight:400;color:#222;">10.0.148.49</span><div class="hl" style="left:2683.6px;top:1096.8px;width:343.2px"></div><span class="t " style="left:2683.6px;top:1103.5px;font-size:15.2px;line-height:20px;font-weight:400;color:#1a1a1a;-webkit-text-stroke:.55px #1a1a1a">Public IP</span><span class="t mono" style="left:2817px;top:1104.2px;font-size:14.25px;line-height:19px;font-weight:400;color:#222;">--</span><div class="hl" style="left:2683.6px;top:1127.1px;width:343.2px"></div><span class="t " style="left:2683.6px;top:1133.7px;font-size:15.2px;line-height:20px;font-weight:400;color:#1a1a1a;-webkit-text-stroke:.55px #1a1a1a">Subnet</span><span class="t mono" style="left:2817px;top:1134.4px;font-size:14.25px;line-height:19px;font-weight:400;color:#222;">10.0.148.0/24</span><div class="hl" style="left:2683.6px;top:1157.3px;width:343.2px"></div><span class="t " style="left:2683.6px;top:1164.0px;font-size:15.2px;line-height:20px;font-weight:400;color:#1a1a1a;-webkit-text-stroke:.55px #1a1a1a">MTU</span><span class="t mono" style="left:2817px;top:1164.7px;font-size:14.25px;line-height:19px;font-weight:400;color:#222;">1500</span><div class="hl" style="left:2683.6px;top:1187.6px;width:343.2px"></div><span class="t " style="left:2683.6px;top:1194.2px;font-size:15.2px;line-height:20px;font-weight:400;color:#1a1a1a;-webkit-text-stroke:.55px #1a1a1a">MAC</span><span class="t mono" style="left:2817px;top:1194.9px;font-size:14.25px;line-height:19px;font-weight:400;color:#222;">02:00:17:26:e8:07</span>
<svg class="a" style="left:2620px;top:69px" width="420" height="1000" viewBox="2620 69 420 1000"><polyline points="2637.25,953.8 2643.75,959.3 2637.25,964.8" fill="none" stroke="#f48a4a" stroke-width="3" stroke-linecap="round" stroke-linejoin="round"/><circle cx="3007.2" cy="89.2" r="13.4" fill="#fff" stroke="#ececec" stroke-width="1.3"/><path d="M3002.800 84.800 L3011.600 93.600 M3011.600 84.800 L3002.800 93.600" stroke="#f48a4a" stroke-width="3.9"/><polyline points="2685.0,340.8 2689.8,346.2 2694.6000000000004,340.8" fill="none" stroke="#f37021" stroke-width="3.1" stroke-linecap="round" stroke-linejoin="round"/><polyline points="2685.0,577.9 2689.8,583.3000000000001 2694.6000000000004,577.9" fill="none" stroke="#f37021" stroke-width="3.1" stroke-linecap="round" stroke-linejoin="round"/><polyline points="2685.0,784.9 2689.8,790.3000000000001 2694.6000000000004,784.9" fill="none" stroke="#f37021" stroke-width="3.1" stroke-linecap="round" stroke-linejoin="round"/><g fill="none" stroke="#fff" stroke-width="4.2" stroke-linejoin="round" stroke-linecap="round"><path d="M2705.300 181.100 H2694.100 V212.200 H2743.800 V181.100 H2733.100"/><path d="M2719.800 177.600 V201 M2708 189.600 L2719.800 201.400 L2731.600 189.600"/></g><g fill="none" stroke="#fff" stroke-width="3.900" stroke-linejoin="round" stroke-linecap="round"><path d="M2703 264.300 H2694 V291 H2735.700 V264.300 H2726.700"/><path d="M2715.200 281.500 V262.500 M2705.300 271.400 L2715.200 261.600 L2725.100 271.400"/></g></svg>
<div class="a" style="left:1326.7px;top:709px;width:110px;height:45px;background:#fdfdfd;border-radius:7px 7px 0 0"></div>
<svg class="a" style="left:1360px;top:715px" width="40" height="24" viewBox="1360 715 40 24"><polyline points="1372.2,724.8000000000001 1377.2,730.4 1382.2,724.8000000000001" fill="none" stroke="#f48a4a" stroke-width="3.1" stroke-linecap="round" stroke-linejoin="round"/></svg>
<div class="a" style="left:320px;top:748.8px;width:2129px;height:1060px;background:#fff;border-radius:15px 15px 0 0;box-shadow:0 -2px 7px rgba(0,0,0,.2), 0 0 3px rgba(0,0,0,.1)"></div>
<span class="t" style="left:1184px;width:400px;text-align:center;top:775px;font-size:25.2px;line-height:32px;color:#1c1c1c;-webkit-text-stroke:.75px #1c1c1c">cloudSwXtch1</span>
<svg class="a" style="left:2388px;top:780px" width="24" height="22" viewBox="2388 780 24 22"><path d="M2406 784.600 L2395.200 795.400 M2394.600 787.400 V796.200 H2403.400" fill="none" stroke="#1c1c1c" stroke-width="3.2"/></svg>
<div class="a" style="left:349px;top:858.8px;width:2070px;height:3px;background:#dedede"></div>
<div class="a" style="left:349px;top:803.3px;width:117px;height:57px;background:#f1f1f1;border:1.3px solid #dcdcdc;border-bottom:none;border-radius:9px 9px 0 0"></div>
<span class="t " style="left:372.8px;top:822.5px;font-size:18px;line-height:23px;font-weight:400;color:#1c1c1c;-webkit-text-stroke:.4px #1c1c1c">Lossless</span>
<span class="t" style="left:806.7px;width:100px;text-align:center;top:880px;font-size:18.9px;line-height:24px;color:#1c1c1c;-webkit-text-stroke:.4px #1c1c1c">RX</span><div class="a" style="left:349px;top:924.6px;width:1015.4000000000001px;height:445.8px;border:1.3px solid #ebebeb;border-radius:13px;background:#fff"></div><span class="t " style="left:368px;top:939.6px;font-size:18.6px;line-height:24px;font-weight:400;color:#1c1c1c;-webkit-text-stroke:.55px #1c1c1c">Data IP</span><span class="t " style="left:545.7px;top:939.6px;font-size:18.6px;line-height:24px;font-weight:400;color:#1c1c1c;-webkit-text-stroke:.55px #1c1c1c">RTT</span><span class="t " style="left:708.3px;top:939.6px;font-size:18.6px;line-height:24px;font-weight:400;color:#1c1c1c;-webkit-text-stroke:.55px #1c1c1c">RTT Var</span><span class="t " style="left:871.2px;top:939.6px;font-size:18.6px;line-height:24px;font-weight:400;color:#1c1c1c;-webkit-text-stroke:.55px #1c1c1c">Data Pkts</span><span class="t " style="left:1033.9px;top:939.6px;font-size:18.6px;line-height:24px;font-weight:400;color:#1c1c1c;-webkit-text-stroke:.55px #1c1c1c">Retr Pkts</span><span class="t " style="left:1196.6px;top:939.6px;font-size:18.6px;line-height:24px;font-weight:400;color:#1c1c1c;-webkit-text-stroke:.55px #1c1c1c">Pkts Lost</span><div class="a" style="left:368px;top:982px;width:976.4000000000001px;height:1px;background:#e2e2e2"></div><span class="t mono" style="left:368px;top:995.5px;font-size:12.55px;line-height:16px;font-weight:400;color:#222;">10.0.148.120</span><span class="t mono" style="left:541.4000000000001px;top:995.5px;font-size:12.55px;line-height:16px;font-weight:400;color:#222;">256.2 µs</span><span class="t mono" style="left:704.0px;top:995.5px;font-size:12.55px;line-height:16px;font-weight:400;color:#222;">3.45 µs</span><span class="t mono" style="left:866.9000000000001px;top:995.5px;font-size:12.55px;line-height:16px;font-weight:400;color:#222;">0</span><span class="t mono" style="left:1029.6000000000001px;top:995.5px;font-size:12.55px;line-height:16px;font-weight:400;color:#222;">0</span><span class="t mono" style="left:1192.3px;top:995.5px;font-size:12.55px;line-height:16px;font-weight:400;color:#222;">0</span><div class="a" style="left:368px;top:1022.0px;width:976.4000000000001px;height:2px;background:#e3e3e3"></div><span class="t mono" style="left:368px;top:1036.4px;font-size:12.55px;line-height:16px;font-weight:400;color:#222;">10.0.148.147</span><span class="t mono" style="left:541.4000000000001px;top:1036.4px;font-size:12.55px;line-height:16px;font-weight:400;color:#222;">134.2 µs</span><span class="t mono" style="left:704.0px;top:1036.4px;font-size:12.55px;line-height:16px;font-weight:400;color:#222;">2.09 µs</span><span class="t mono" style="left:866.9000000000001px;top:1036.4px;font-size:12.55px;line-height:16px;font-weight:400;color:#222;">0</span><span class="t mono" style="left:1029.6000000000001px;top:1036.4px;font-size:12.55px;line-height:16px;font-weight:400;color:#222;">0</span><span class="t mono" style="left:1192.3px;top:1036.4px;font-size:12.55px;line-height:16px;font-weight:400;color:#222;">0</span><div class="a" style="left:368px;top:1062.9px;width:976.4000000000001px;height:2px;background:#e3e3e3"></div><span class="t mono" style="left:368px;top:1077.4px;font-size:12.55px;line-height:16px;font-weight:400;color:#222;">10.0.148.17</span><span class="t mono" style="left:541.4000000000001px;top:1077.4px;font-size:12.55px;line-height:16px;font-weight:400;color:#222;">127.7 µs</span><span class="t mono" style="left:704.0px;top:1077.4px;font-size:12.55px;line-height:16px;font-weight:400;color:#222;">1.76 µs</span><span class="t mono" style="left:866.9000000000001px;top:1077.4px;font-size:12.55px;line-height:16px;font-weight:400;color:#222;">4.04 M</span><span class="t mono" style="left:1029.6000000000001px;top:1077.4px;font-size:12.55px;line-height:16px;font-weight:400;color:#222;">6 k</span><span class="t mono" style="left:1192.3px;top:1077.4px;font-size:12.55px;line-height:16px;font-weight:400;color:#222;">0</span><div class="a" style="left:368px;top:1103.9px;width:976.4000000000001px;height:2px;background:#e3e3e3"></div><span class="t mono" style="left:368px;top:1118.3px;font-size:12.55px;line-height:16px;font-weight:400;color:#222;">10.0.148.19</span><span class="t mono" style="left:541.4000000000001px;top:1118.3px;font-size:12.55px;line-height:16px;font-weight:400;color:#222;">79.7 µs</span><span class="t mono" style="left:704.0px;top:1118.3px;font-size:12.55px;line-height:16px;font-weight:400;color:#222;">1.16 µs</span><span class="t mono" style="left:866.9000000000001px;top:1118.3px;font-size:12.55px;line-height:16px;font-weight:400;color:#222;">200.6 k</span><span class="t mono" style="left:1029.6000000000001px;top:1118.3px;font-size:12.55px;line-height:16px;font-weight:400;color:#222;">297</span><span class="t mono" style="left:1192.3px;top:1118.3px;font-size:12.55px;line-height:16px;font-weight:400;color:#222;">0</span><div class="a" style="left:368px;top:1144.8px;width:976.4000000000001px;height:2px;background:#e3e3e3"></div><span class="t mono" style="left:368px;top:1159.2px;font-size:12.55px;line-height:16px;font-weight:400;color:#222;">10.0.148.212</span><span class="t mono" style="left:541.4000000000001px;top:1159.2px;font-size:12.55px;line-height:16px;font-weight:400;color:#222;">74.6 µs</span><span class="t mono" style="left:704.0px;top:1159.2px;font-size:12.55px;line-height:16px;font-weight:400;color:#222;">3.01 µs</span><span class="t mono" style="left:866.9000000000001px;top:1159.2px;font-size:12.55px;line-height:16px;font-weight:400;color:#222;">0</span><span class="t mono" style="left:1029.6000000000001px;top:1159.2px;font-size:12.55px;line-height:16px;font-weight:400;color:#222;">0</span><span class="t mono" style="left:1192.3px;top:1159.2px;font-size:12.55px;line-height:16px;font-weight:400;color:#222;">0</span><div class="a" style="left:368px;top:1185.7px;width:976.4000000000001px;height:2px;background:#e3e3e3"></div><span class="t mono" style="left:368px;top:1200.2px;font-size:12.55px;line-height:16px;font-weight:400;color:#222;">10.0.148.217</span><span class="t mono" style="left:541.4000000000001px;top:1200.2px;font-size:12.55px;line-height:16px;font-weight:400;color:#222;">76.2 µs</span><span class="t mono" style="left:704.0px;top:1200.2px;font-size:12.55px;line-height:16px;font-weight:400;color:#222;">2.96 µs</span><span class="t mono" style="left:866.9000000000001px;top:1200.2px;font-size:12.55px;line-height:16px;font-weight:400;color:#222;">0</span><span class="t mono" style="left:1029.6000000000001px;top:1200.2px;font-size:12.55px;line-height:16px;font-weight:400;color:#222;">0</span><span class="t mono" style="left:1192.3px;top:1200.2px;font-size:12.55px;line-height:16px;font-weight:400;color:#222;">0</span><div class="a" style="left:368px;top:1226.7px;width:976.4000000000001px;height:2px;background:#e3e3e3"></div><span class="t mono" style="left:368px;top:1241.1px;font-size:12.55px;line-height:16px;font-weight:400;color:#222;">10.0.148.250</span><span class="t mono" style="left:541.4000000000001px;top:1241.1px;font-size:12.55px;line-height:16px;font-weight:400;color:#222;">65.5 µs</span><span class="t mono" style="left:704.0px;top:1241.1px;font-size:12.55px;line-height:16px;font-weight:400;color:#222;">2.43 µs</span><span class="t mono" style="left:866.9000000000001px;top:1241.1px;font-size:12.55px;line-height:16px;font-weight:400;color:#222;">4.04 M</span><span class="t mono" style="left:1029.6000000000001px;top:1241.1px;font-size:12.55px;line-height:16px;font-weight:400;color:#222;">4 k</span><span class="t mono" style="left:1192.3px;top:1241.1px;font-size:12.55px;line-height:16px;font-weight:400;color:#222;">0</span><div class="a" style="left:368px;top:1267.6px;width:976.4000000000001px;height:2px;background:#e3e3e3"></div><span class="t mono" style="left:368px;top:1282.0px;font-size:12.55px;line-height:16px;font-weight:400;color:#222;">10.0.148.51</span><span class="t mono" style="left:541.4000000000001px;top:1282.0px;font-size:12.55px;line-height:16px;font-weight:400;color:#222;">69.1 µs</span><span class="t mono" style="left:704.0px;top:1282.0px;font-size:12.55px;line-height:16px;font-weight:400;color:#222;">2.49 µs</span><span class="t mono" style="left:866.9000000000001px;top:1282.0px;font-size:12.55px;line-height:16px;font-weight:400;color:#222;">4.04 M</span><span class="t mono" style="left:1029.6000000000001px;top:1282.0px;font-size:12.55px;line-height:16px;font-weight:400;color:#222;">6 k</span><span class="t mono" style="left:1192.3px;top:1282.0px;font-size:12.55px;line-height:16px;font-weight:400;color:#222;">0</span><div class="a" style="left:368px;top:1308.5px;width:976.4000000000001px;height:2px;background:#e3e3e3"></div><span class="t mono" style="left:368px;top:1322.9px;font-size:12.55px;line-height:16px;font-weight:400;color:#222;">10.0.148.64</span><span class="t mono" style="left:541.4000000000001px;top:1322.9px;font-size:12.55px;line-height:16px;font-weight:400;color:#222;">252.1 µs</span><span class="t mono" style="left:704.0px;top:1322.9px;font-size:12.55px;line-height:16px;font-weight:400;color:#222;">2.70 µs</span><span class="t mono" style="left:866.9000000000001px;top:1322.9px;font-size:12.55px;line-height:16px;font-weight:400;color:#222;">0</span><span class="t mono" style="left:1029.6000000000001px;top:1322.9px;font-size:12.55px;line-height:16px;font-weight:400;color:#222;">0</span><span class="t mono" style="left:1192.3px;top:1322.9px;font-size:12.55px;line-height:16px;font-weight:400;color:#222;">0</span><div class="a" style="left:368px;top:1349.4px;width:976.4000000000001px;height:1.3px;background:#e6e6e6"></div>
<span class="t" style="left:1861.4px;width:100px;text-align:center;top:880px;font-size:18.9px;line-height:24px;color:#1c1c1c;-webkit-text-stroke:.4px #1c1c1c">TX</span><div class="a" style="left:1403.8px;top:924.6px;width:1015.2px;height:445.8px;border:1.3px solid #ebebeb;border-radius:13px;background:#fff"></div><span class="t " style="left:1422.8px;top:939.6px;font-size:18.6px;line-height:24px;font-weight:400;color:#1c1c1c;-webkit-text-stroke:.55px #1c1c1c">Data IP</span><span class="t " style="left:1600.5px;top:939.6px;font-size:18.6px;line-height:24px;font-weight:400;color:#1c1c1c;-webkit-text-stroke:.55px #1c1c1c">RTT</span><span class="t " style="left:1763.1px;top:939.6px;font-size:18.6px;line-height:24px;font-weight:400;color:#1c1c1c;-webkit-text-stroke:.55px #1c1c1c">RTT Var</span><span class="t " style="left:1926.0px;top:939.6px;font-size:18.6px;line-height:24px;font-weight:400;color:#1c1c1c;-webkit-text-stroke:.55px #1c1c1c">Data Pkts</span><span class="t " style="left:2088.7px;top:939.6px;font-size:18.6px;line-height:24px;font-weight:400;color:#1c1c1c;-webkit-text-stroke:.55px #1c1c1c">Retr Pkts</span><span class="t " style="left:2251.4px;top:939.6px;font-size:18.6px;line-height:24px;font-weight:400;color:#1c1c1c;-webkit-text-stroke:.55px #1c1c1c">Retr Drops</span><div class="a" style="left:1422.8px;top:982px;width:976.2px;height:1px;background:#e2e2e2"></div><span class="t mono" style="left:1422.8px;top:995.5px;font-size:12.55px;line-height:16px;font-weight:400;color:#222;">10.0.148.120</span><span class="t mono" style="left:1596.2px;top:995.5px;font-size:12.55px;line-height:16px;font-weight:400;color:#222;">254.0 µs</span><span class="t mono" style="left:1758.8px;top:995.5px;font-size:12.55px;line-height:16px;font-weight:400;color:#222;">2.02 µs</span><span class="t mono" style="left:1921.7px;top:995.5px;font-size:12.55px;line-height:16px;font-weight:400;color:#222;">721.1 k</span><span class="t mono" style="left:2084.3999999999996px;top:995.5px;font-size:12.55px;line-height:16px;font-weight:400;color:#222;">2 k</span><span class="t mono" style="left:2247.1px;top:995.5px;font-size:12.55px;line-height:16px;font-weight:400;color:#222;">0</span><div class="a" style="left:1422.8px;top:1022.0px;width:976.2px;height:2px;background:#e3e3e3"></div><span class="t mono" style="left:1422.8px;top:1036.4px;font-size:12.55px;line-height:16px;font-weight:400;color:#222;">10.0.148.147</span><span class="t mono" style="left:1596.2px;top:1036.4px;font-size:12.55px;line-height:16px;font-weight:400;color:#222;">127.0 µs</span><span class="t mono" style="left:1758.8px;top:1036.4px;font-size:12.55px;line-height:16px;font-weight:400;color:#222;">910.0 ns</span><span class="t mono" style="left:1921.7px;top:1036.4px;font-size:12.55px;line-height:16px;font-weight:400;color:#222;">360.6 k</span><span class="t mono" style="left:2084.3999999999996px;top:1036.4px;font-size:12.55px;line-height:16px;font-weight:400;color:#222;">124</span><span class="t mono" style="left:2247.1px;top:1036.4px;font-size:12.55px;line-height:16px;font-weight:400;color:#222;">0</span><div class="a" style="left:1422.8px;top:1062.9px;width:976.2px;height:2px;background:#e3e3e3"></div><span class="t mono" style="left:1422.8px;top:1077.4px;font-size:12.55px;line-height:16px;font-weight:400;color:#222;">10.0.148.17</span><span class="t mono" style="left:1596.2px;top:1077.4px;font-size:12.55px;line-height:16px;font-weight:400;color:#222;">125.5 µs</span><span class="t mono" style="left:1758.8px;top:1077.4px;font-size:12.55px;line-height:16px;font-weight:400;color:#222;">1.83 µs</span><span class="t mono" style="left:1921.7px;top:1077.4px;font-size:12.55px;line-height:16px;font-weight:400;color:#222;">0</span><span class="t mono" style="left:2084.3999999999996px;top:1077.4px;font-size:12.55px;line-height:16px;font-weight:400;color:#222;">0</span><span class="t mono" style="left:2247.1px;top:1077.4px;font-size:12.55px;line-height:16px;font-weight:400;color:#222;">0</span><div class="a" style="left:1422.8px;top:1103.9px;width:976.2px;height:2px;background:#e3e3e3"></div><span class="t mono" style="left:1422.8px;top:1118.3px;font-size:12.55px;line-height:16px;font-weight:400;color:#222;">10.0.148.19</span><span class="t mono" style="left:1596.2px;top:1118.3px;font-size:12.55px;line-height:16px;font-weight:400;color:#222;">76.7 µs</span><span class="t mono" style="left:1758.8px;top:1118.3px;font-size:12.55px;line-height:16px;font-weight:400;color:#222;">3.40 µs</span><span class="t mono" style="left:1921.7px;top:1118.3px;font-size:12.55px;line-height:16px;font-weight:400;color:#222;">4.04 M</span><span class="t mono" style="left:2084.3999999999996px;top:1118.3px;font-size:12.55px;line-height:16px;font-weight:400;color:#222;">1 k</span><span class="t mono" style="left:2247.1px;top:1118.3px;font-size:12.55px;line-height:16px;font-weight:400;color:#222;">0</span><div class="a" style="left:1422.8px;top:1144.8px;width:976.2px;height:2px;background:#e3e3e3"></div><span class="t mono" style="left:1422.8px;top:1159.2px;font-size:12.55px;line-height:16px;font-weight:400;color:#222;">10.0.148.212</span><span class="t mono" style="left:1596.2px;top:1159.2px;font-size:12.55px;line-height:16px;font-weight:400;color:#222;">69.0 µs</span><span class="t mono" style="left:1758.8px;top:1159.2px;font-size:12.55px;line-height:16px;font-weight:400;color:#222;">3.06 µs</span><span class="t mono" style="left:1921.7px;top:1159.2px;font-size:12.55px;line-height:16px;font-weight:400;color:#222;">45.1 k</span><span class="t mono" style="left:2084.3999999999996px;top:1159.2px;font-size:12.55px;line-height:16px;font-weight:400;color:#222;">0</span><span class="t mono" style="left:2247.1px;top:1159.2px;font-size:12.55px;line-height:16px;font-weight:400;color:#222;">0</span><div class="a" style="left:1422.8px;top:1185.7px;width:976.2px;height:2px;background:#e3e3e3"></div><span class="t mono" style="left:1422.8px;top:1200.2px;font-size:12.55px;line-height:16px;font-weight:400;color:#222;">10.0.148.217</span><span class="t mono" style="left:1596.2px;top:1200.2px;font-size:12.55px;line-height:16px;font-weight:400;color:#222;">74.9 µs</span><span class="t mono" style="left:1758.8px;top:1200.2px;font-size:12.55px;line-height:16px;font-weight:400;color:#222;">1.69 µs</span><span class="t mono" style="left:1921.7px;top:1200.2px;font-size:12.55px;line-height:16px;font-weight:400;color:#222;">4.04 M</span><span class="t mono" style="left:2084.3999999999996px;top:1200.2px;font-size:12.55px;line-height:16px;font-weight:400;color:#222;">344</span><span class="t mono" style="left:2247.1px;top:1200.2px;font-size:12.55px;line-height:16px;font-weight:400;color:#222;">0</span><div class="a" style="left:1422.8px;top:1226.7px;width:976.2px;height:2px;background:#e3e3e3"></div><span class="t mono" style="left:1422.8px;top:1241.1px;font-size:12.55px;line-height:16px;font-weight:400;color:#222;">10.0.148.250</span><span class="t mono" style="left:1596.2px;top:1241.1px;font-size:12.55px;line-height:16px;font-weight:400;color:#222;">64.4 µs</span><span class="t mono" style="left:1758.8px;top:1241.1px;font-size:12.55px;line-height:16px;font-weight:400;color:#222;">1.66 µs</span><span class="t mono" style="left:1921.7px;top:1241.1px;font-size:12.55px;line-height:16px;font-weight:400;color:#222;">360.5 k</span><span class="t mono" style="left:2084.3999999999996px;top:1241.1px;font-size:12.55px;line-height:16px;font-weight:400;color:#222;">0</span><span class="t mono" style="left:2247.1px;top:1241.1px;font-size:12.55px;line-height:16px;font-weight:400;color:#222;">0</span><div class="a" style="left:1422.8px;top:1267.6px;width:976.2px;height:2px;background:#e3e3e3"></div><span class="t mono" style="left:1422.8px;top:1282.0px;font-size:12.55px;line-height:16px;font-weight:400;color:#222;">10.0.148.51</span><span class="t mono" style="left:1596.2px;top:1282.0px;font-size:12.55px;line-height:16px;font-weight:400;color:#222;">67.8 µs</span><span class="t mono" style="left:1758.8px;top:1282.0px;font-size:12.55px;line-height:16px;font-weight:400;color:#222;">3.01 µs</span><span class="t mono" style="left:1921.7px;top:1282.0px;font-size:12.55px;line-height:16px;font-weight:400;color:#222;">1.62 M</span><span class="t mono" style="left:2084.3999999999996px;top:1282.0px;font-size:12.55px;line-height:16px;font-weight:400;color:#222;">4 k</span><span class="t mono" style="left:2247.1px;top:1282.0px;font-size:12.55px;line-height:16px;font-weight:400;color:#222;">0</span><div class="a" style="left:1422.8px;top:1308.5px;width:976.2px;height:2px;background:#e3e3e3"></div><span class="t mono" style="left:1422.8px;top:1322.9px;font-size:12.55px;line-height:16px;font-weight:400;color:#222;">10.0.148.64</span><span class="t mono" style="left:1596.2px;top:1322.9px;font-size:12.55px;line-height:16px;font-weight:400;color:#222;">246.6 µs</span><span class="t mono" style="left:1758.8px;top:1322.9px;font-size:12.55px;line-height:16px;font-weight:400;color:#222;">4.94 µs</span><span class="t mono" style="left:1921.7px;top:1322.9px;font-size:12.55px;line-height:16px;font-weight:400;color:#222;">12.1 M</span><span class="t mono" style="left:2084.3999999999996px;top:1322.9px;font-size:12.55px;line-height:16px;font-weight:400;color:#222;">90 k</span><span class="t mono" style="left:2247.1px;top:1322.9px;font-size:12.55px;line-height:16px;font-weight:400;color:#222;">0</span><div class="a" style="left:1422.8px;top:1349.4px;width:976.2px;height:1.3px;background:#e6e6e6"></div>
<div class="a" style="left:398px;top:220px;width:658.8px;height:279.4px;background:#fff;border:5px solid #ed1c24"></div>
<span class="t" style="left:414.8px;top:259.0px;font-size:29.5px;line-height:36px;font-weight:700;color:#000;letter-spacing:0px">Selecting the Lossless from the Component</span>
<span class="t" style="left:414.8px;top:301.4px;font-size:29.5px;line-height:36px;font-weight:700;color:#000;letter-spacing:0.18px">radial menu will open the Lossless tab,</span>
<span class="t" style="left:414.8px;top:343.8px;font-size:29.5px;line-height:36px;font-weight:700;color:#000;letter-spacing:0.24px">displaying all the components with RX and</span>
<span class="t" style="left:414.8px;top:386.2px;font-size:29.5px;line-height:36px;font-weight:700;color:#000;letter-spacing:-0.375px">TX lossless data.</span>
<svg class="a" style="left:1040px;top:400px" width="440" height="360" viewBox="1040 400 440 360"><rect x="1168.3" y="472.800" width="287" height="211.800" fill="none" stroke="#ed1c24" stroke-width="4.9"/><path d="M1056 421 L1171 526.5 M1304 686.5 L1271 741" stroke="#ed1c24" stroke-width="4.8" stroke-linecap="round" fill="none"/></svg>
<div class="a" style="left:13px;top:1775.6px;width:3042px;height:5px;background:#050507"></div>
<div class="a" style="left:384px;top:1776px;width:72px;height:4px;background:#2c2c30"></div>
</body></html>
